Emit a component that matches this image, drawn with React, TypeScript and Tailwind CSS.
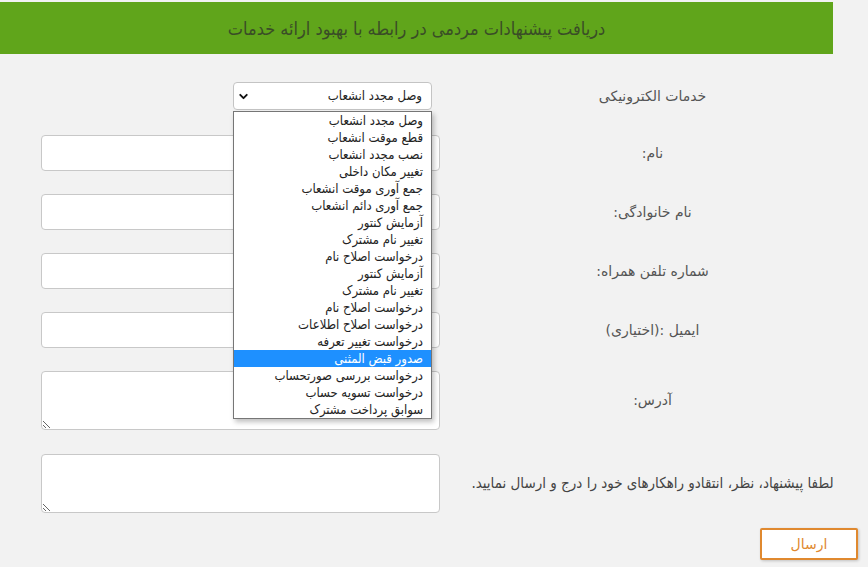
import React from "react"
import { ChevronDown } from "lucide-react"

const services = [
  "وصل مجدد انشعاب",
  "قطع موقت انشعاب",
  "نصب مجدد انشعاب",
  "تغییر مکان داخلی",
  "جمع آوری موقت انشعاب",
  "جمع آوری دائم انشعاب",
  "آزمایش کنتور",
  "تغییر نام مشترک",
  "درخواست اصلاح نام",
  "آزمایش کنتور",
  "تغییر نام مشترک",
  "درخواست اصلاح نام",
  "درخواست اصلاح اطلاعات",
  "درخواست تغییر تعرفه",
  "صدور قبض المثنی",
  "درخواست بررسی صورتحساب",
  "درخواست تسویه حساب",
  "سوابق پرداخت مشترک",
]

const selected = 14

function Label({ children }: { children: React.ReactNode }) {
  return (
    <div className="w-[385px] shrink-0 whitespace-nowrap text-center text-[14px] text-[#555]">
      {children}
    </div>
  )
}

function Field({ label, first }: { label: string; first?: boolean }) {
  return (
    <div className={first ? "mt-[25px] flex items-center pr-[23px]" : "mt-[23px] flex items-center pr-[23px]"}>
      <Label>{label}</Label>
      <input
        type="text"
        className="mr-[20px] h-[36px] w-[399px] rounded-[4px] border border-[#c8c8c8] bg-white px-2 outline-none"
      />
    </div>
  )
}

export default function App() {
  return (
    <div
      dir="rtl"
      className="min-h-[567px] w-[868px] bg-[#f2f2f2] pt-[2px] font-['DejaVu_Sans',sans-serif]"
    >
      <div className="mr-[35px] flex h-[52px] items-center justify-center bg-[#60a51b] font-['DejaVu_Sans_Condensed','DejaVu_Sans',sans-serif] text-[18px] text-[#3a4d27]">
        دریافت پیشنهادات مردمی در رابطه با بهبود ارائه خدمات
      </div>

      <div className="mt-[28px] flex items-center pr-[23px]">
        <Label>خدمات الکترونیکی</Label>
        <div className="relative mr-[28px] w-[199px] font-['DejaVu_Sans_Condensed','DejaVu_Sans',sans-serif]">
          <div className="flex h-[28px] items-center justify-between rounded-[4px] border border-[#c4c4c4] bg-white pl-[3px] pr-[9px] text-[13px] text-[#222]">
            <span>{services[0]}</span>
            <ChevronDown size={13} strokeWidth={3.5} className="text-[#111]" />
          </div>
          <div className="absolute right-0 top-[29px] z-10 w-[199px] border border-[#767676] bg-white shadow-[2px_3px_5px_rgba(0,0,0,0.25)]">
            {services.map((s, i) => (
              <div
                key={i}
                className={
                  i === selected
                    ? "h-[17px] whitespace-nowrap bg-[#1e90ff] pr-2 text-[13px] leading-[17px] text-white"
                    : "h-[17px] whitespace-nowrap pr-2 text-[13px] leading-[17px] text-[#222]"
                }
              >
                {s}
              </div>
            ))}
          </div>
        </div>
      </div>

      <Field label="نام:" first />
      <Field label="نام خانوادگی:" />
      <Field label="شماره تلفن همراه:" />
      <Field label="ایمیل :(اختیاری)" />

      <div className="mt-[23px] flex items-center pr-[23px]">
        <Label>آدرس:</Label>
        <textarea className="mr-[20px] h-[59px] w-[399px] rounded-[4px] border border-[#c8c8c8] bg-white px-2 outline-none" />
      </div>

      <div className="mt-[24px] flex items-center pr-[23px]">
        <div className="w-[385px] shrink-0 whitespace-nowrap text-center font-['DejaVu_Sans_Condensed','DejaVu_Sans',sans-serif] text-[15px] text-[#444]">
          لطفا پیشنهاد، نظر، انتقادو راهکارهای خود را درج و ارسال نمایید.
        </div>
        <textarea className="mr-[20px] h-[59px] w-[399px] rounded-[4px] border border-[#c8c8c8] bg-white px-2 outline-none" />
      </div>

      <div className="mt-[15px] flex pr-[10px]">
        <button className="h-[32px] w-[98px] rounded-[2px] border-2 border-[#e0892f] bg-white text-[14px] text-[#e0892f] shadow-[1px_1px_3px_rgba(0,0,0,0.2)]">
          ارسال
        </button>
      </div>
    </div>
  )
}
